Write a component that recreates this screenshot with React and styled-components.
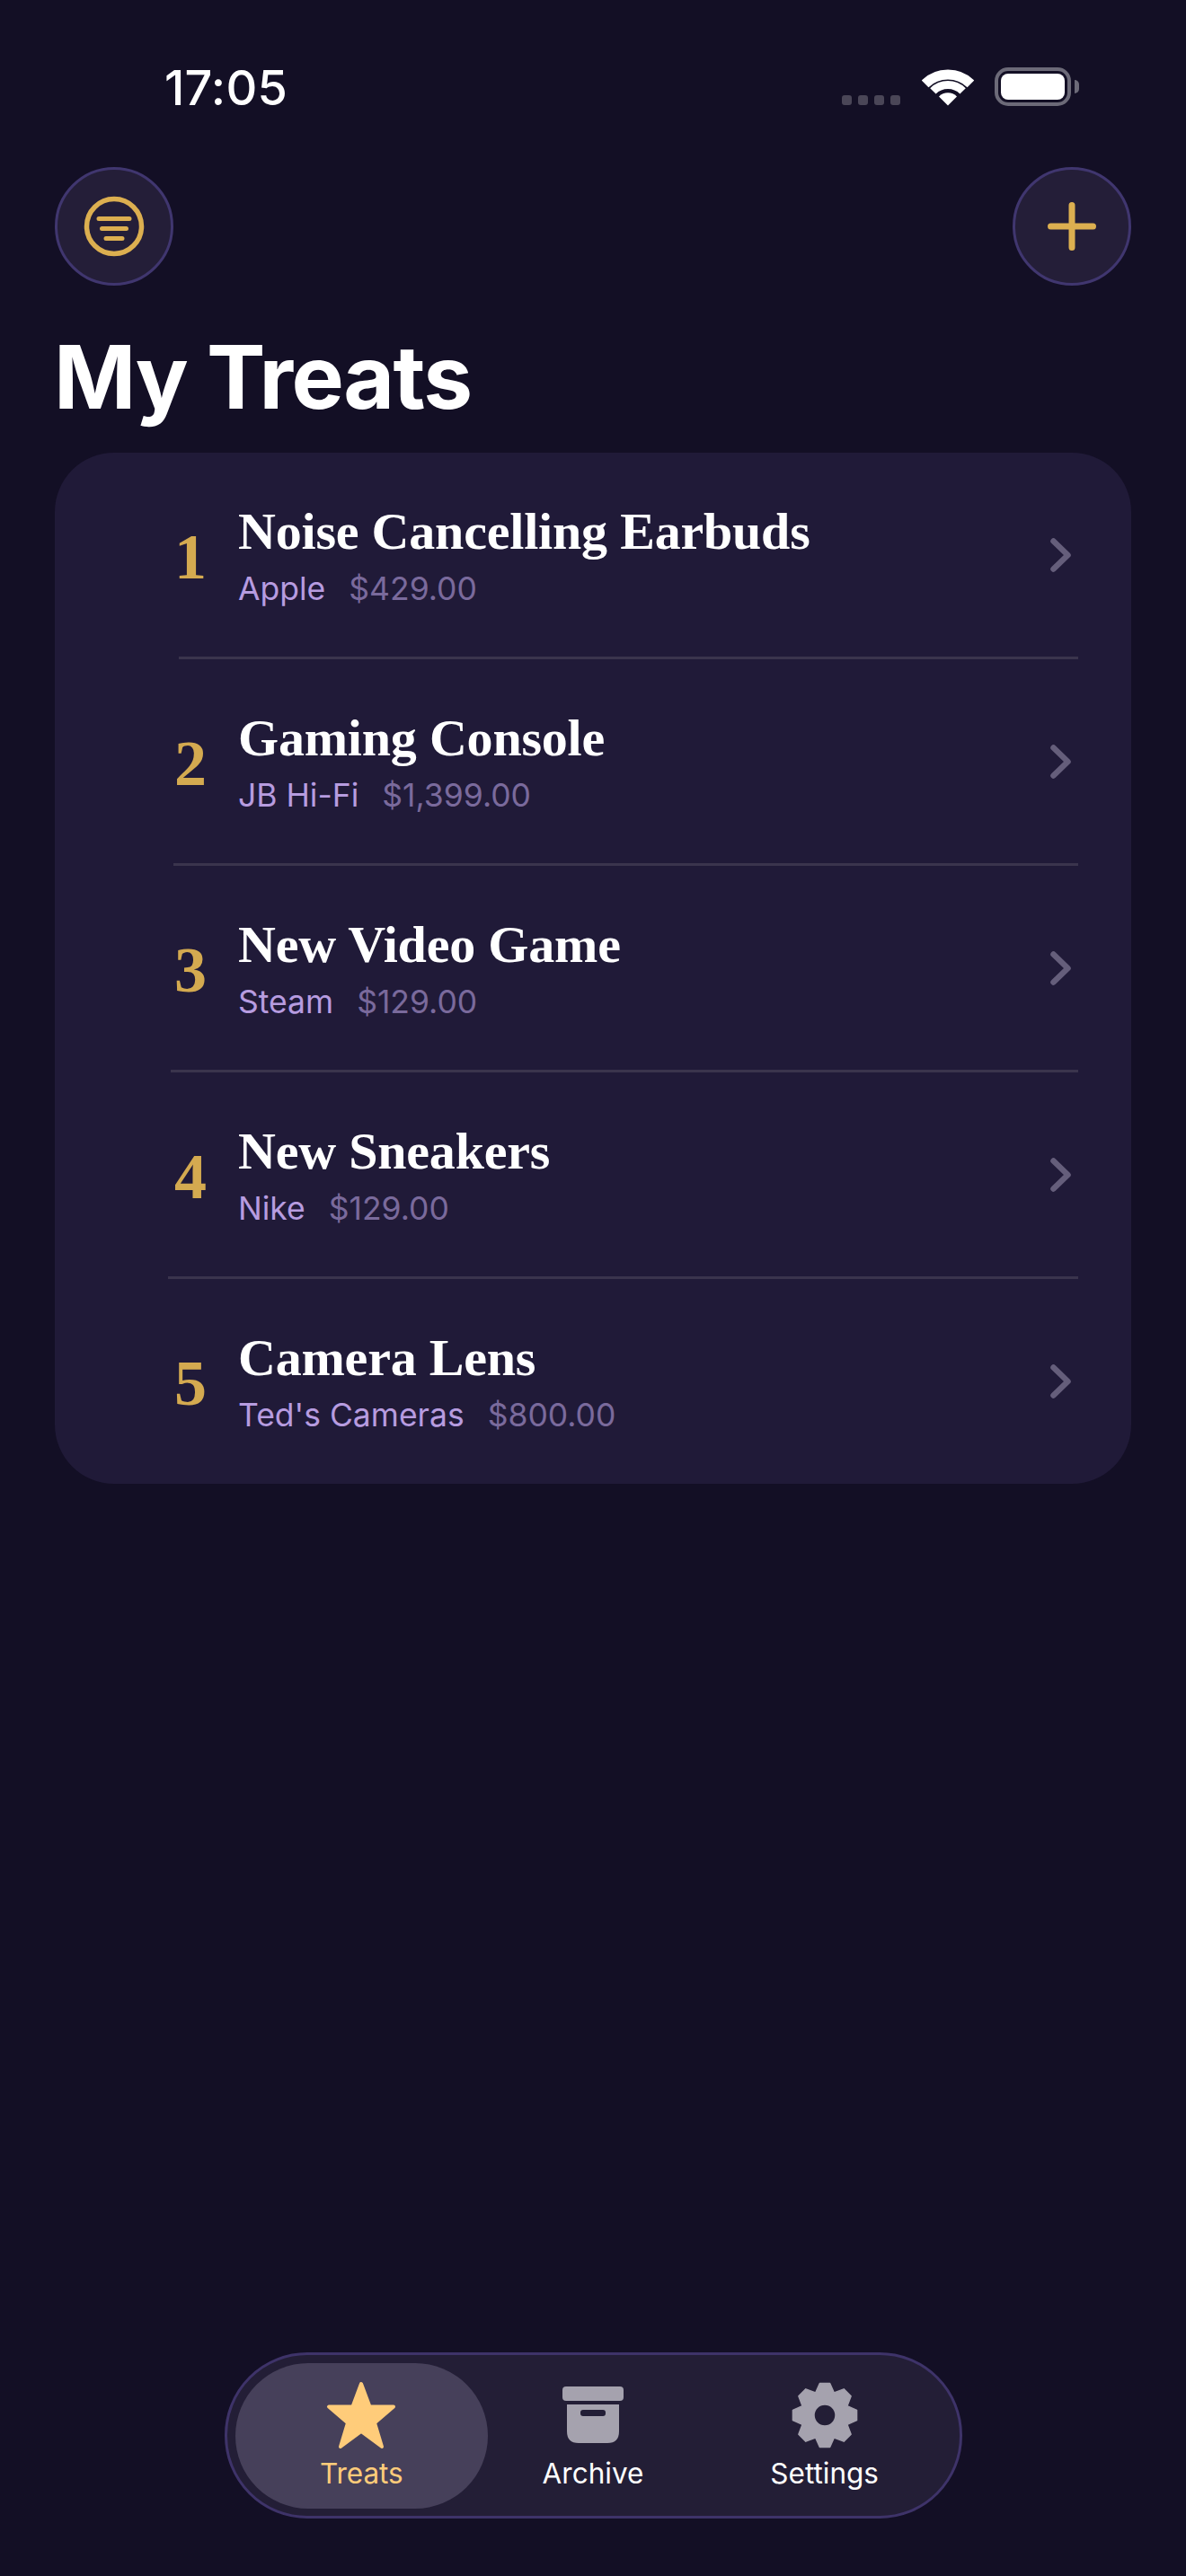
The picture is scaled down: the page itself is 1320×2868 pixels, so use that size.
import React from 'react';
import styled, { createGlobalStyle } from 'styled-components';

const Global = createGlobalStyle`
  html, body { margin: 0; padding: 0; background: #130F25; }
  * { box-sizing: border-box; }
`;

const Page = styled.div`
  width: 1320px;
  height: 2868px;
  background: #130F25;
  display: flex;
  flex-direction: column;
  font-family: Inter, "Liberation Sans", sans-serif;
  color: #fff;
  overflow: hidden;
`;

const StatusBar = styled.div`
  height: 186px;
  padding: 68px 128px 0 183px;
  display: flex;
  justify-content: space-between;
  align-items: flex-start;
`;

const Time = styled.div`
  font-size: 54px;
  line-height: 60px;
  font-weight: 500;
  letter-spacing: 0.2px;
`;

const StatusIcons = styled.div`
  display: flex;
  align-items: flex-start;
  padding-top: 7px;
`;

const Signal = styled.div`
  display: flex;
  gap: 7px;
  margin-top: 31px;
  margin-right: 24px;
`;

const SignalDot = styled.span`
  width: 11px;
  height: 11px;
  border-radius: 3px;
  background: #4A4657;
`;

const Battery = styled.div`
  width: 85px;
  height: 43px;
  margin-left: 23px;
  padding: 3px;
  border: 4px solid #6C6A78;
  border-radius: 15px;
  position: relative;
  &::after {
    content: '';
    position: absolute;
    right: -13px;
    top: 10px;
    width: 5px;
    height: 15px;
    border-radius: 0 5px 5px 0;
    background: #6C6A78;
  }
`;

const BatteryFill = styled.div`
  width: 100%;
  height: 100%;
  background: #fff;
  border-radius: 8px;
`;

const Toolbar = styled.div`
  display: flex;
  justify-content: space-between;
  padding: 0 61px;
`;

const RoundButton = styled.div`
  width: 132px;
  height: 132px;
  border-radius: 50%;
  background: #241E38;
  border: 3px solid #40366F;
  display: flex;
  align-items: center;
  justify-content: center;
`;

const Title = styled.h1`
  margin: 46px 0 0;
  padding-left: 60px;
  height: 140px;
  font-size: 98px;
  line-height: 112px;
  font-weight: 700;
  letter-spacing: -1.5px;
`;

const Card = styled.div`
  margin: 0 61px;
  background: #201A38;
  border-radius: 66px;
  padding-bottom: 1px;
`;

const Row = styled.div`
  height: 227px;
  display: flex;
  align-items: center;
  padding-right: 66px;
`;

const Rank = styled.div`
  width: 169px;
  padding-top: 4px;
  text-align: right;
  font-family: "Liberation Serif", serif;
  font-weight: 700;
  font-size: 72px;
  line-height: 70px;
  color: #D4AA50;
  flex: none;
`;

const Info = styled.div`
  margin-left: 35px;
  flex: 1;
  display: flex;
  flex-direction: column;
`;

const Name = styled.div`
  font-family: "Liberation Serif", serif;
  font-weight: 700;
  font-size: 58px;
  line-height: 66px;
  letter-spacing: -0.2px;
  color: #fff;
  padding-top: 1px;
`;

const Meta = styled.div`
  margin-top: 9px;
  display: flex;
  gap: 26px;
  font-size: 35.5px;
  line-height: 44px;
  font-weight: 400;
`;

const Store = styled.span`
  color: #B79CE0;
`;

const Price = styled.span`
  color: #7A6A9C;
`;

const Separator = styled.div`
  height: 3px;
  margin-left: ${p => p.$inset}px;
  margin-right: 59px;
  background: #3A344D;
`;

const TabBar = styled.div`
  margin: auto auto 64px;
  width: 821px;
  height: 185px;
  border-radius: 92px;
  background: #231E36;
  border: 3px solid #3E3369;
  padding: 9px;
  display: flex;
`;

const Tab = styled.div`
  width: ${p => p.$w}px;
  height: 162px;
  border-radius: 81px;
  background: ${p => (p.$active ? '#46405A' : 'transparent')};
  color: ${p => (p.$active ? '#FFCC7A' : '#fff')};
  display: flex;
  flex-direction: column;
  align-items: center;
  padding-top: 20px;
`;

const TabIcon = styled.div`
  height: 76px;
  display: flex;
  align-items: center;
  justify-content: center;
`;

const TabLabel = styled.div`
  margin-top: 9px;
  font-size: 31.5px;
  line-height: 36px;
  font-weight: 400;
`;

const items = [
  { n: 1, name: 'Noise Cancelling Earbuds', store: 'Apple', price: '$429.00', inset: 138 },
  { n: 2, name: 'Gaming Console', store: 'JB Hi-Fi', price: '$1,399.00', inset: 132 },
  { n: 3, name: 'New Video Game', store: 'Steam', price: '$129.00', inset: 129 },
  { n: 4, name: 'New Sneakers', store: 'Nike', price: '$129.00', inset: 126 },
  { n: 5, name: 'Camera Lens', store: "Ted's Cameras", price: '$800.00' },
];

const Wifi = () => (
  <svg width="58" height="43" viewBox="0 0 58 43">
    <path d="M3.6 18.4 A36.5 36.5 0 0 1 54.4 18.4" fill="none" stroke="#fff" strokeWidth="11" />
    <path d="M12.4 26.4 A23.5 23.5 0 0 1 45.6 26.4" fill="none" stroke="#fff" strokeWidth="9" />
    <path d="M29 42.5 L19 32.5 A14 14 0 0 1 39 32.5 Z" fill="#fff" />
  </svg>
);

const FilterIcon = () => (
  <svg width="70" height="70" viewBox="0 0 70 70" fill="none" stroke="#DCAF50" strokeLinecap="round">
    <circle cx="35" cy="35" r="30.5" strokeWidth="5.5" />
    <path d="M18 26.5H52M21.5 37.5H48.5M26 48.5H44" strokeWidth="5" />
  </svg>
);

const PlusIcon = () => (
  <svg width="54" height="54" viewBox="0 0 54 54" fill="none" stroke="#DCAF50" strokeWidth="7" strokeLinecap="round">
    <path d="M27 3.5V50.5M3.5 27H50.5" />
  </svg>
);

const Chevron = () => (
  <svg width="24" height="38" viewBox="0 0 24 38" fill="none" stroke="#655E7B" strokeWidth="6.5" strokeLinecap="round" strokeLinejoin="round">
    <path d="M3.5 3.5L19.5 19L3.5 34.5" />
  </svg>
);

const Star = () => (
  <svg width="80" height="76" viewBox="0 0 80 76">
    <path
      d="M40 3L49.5 28.5H76L55 46.5L63 73L40 56L17 73L25 46.5L4 28.5H30.5Z"
      fill="#FFCC7A"
      stroke="#FFCC7A"
      strokeWidth="4"
      strokeLinejoin="round"
    />
  </svg>
);

const ArchiveIcon = () => (
  <svg width="68" height="64" viewBox="0 0 68 64" fill="#A5A2AE">
    <rect x="0" y="0" width="68" height="16" rx="4" />
    <path fillRule="evenodd" d="M5 20H63V50Q63 63 50 63H18Q5 63 5 50ZM23 26Q20 26 20 29V30Q20 33 23 33H45Q48 33 48 30V29Q48 26 45 26Z" />
  </svg>
);

const gearPath = (() => {
  const teeth = 8;
  const cx = 37;
  const cy = 37;
  const pts = [];
  for (let i = 0; i < teeth; i += 1) {
    const a = (i / teeth) * Math.PI * 2 - Math.PI / 2;
    const step = (Math.PI * 2) / teeth;
    [[-0.5, 27], [-0.2, 36], [0.2, 36], [0.5, 27]].forEach(([f, r]) => {
      const t = a + f * step;
      pts.push(`${(cx + r * Math.cos(t)).toFixed(2)} ${(cy + r * Math.sin(t)).toFixed(2)}`);
    });
  }
  return `M${pts.join('L')}Z M${cx + 12} ${cy} A12 12 0 1 0 ${cx - 12} ${cy} A12 12 0 1 0 ${cx + 12} ${cy}Z`;
})();

const GearIcon = () => (
  <svg width="74" height="74" viewBox="0 0 74 74">
    <path d={gearPath} fill="#A5A2AE" fillRule="evenodd" stroke="#A5A2AE" strokeWidth="1.5" strokeLinejoin="round" />
  </svg>
);

export default function App() {
  return (
    <Page>
      <Global />
      <StatusBar>
        <Time>17:05</Time>
        <StatusIcons>
          <Signal>
            <SignalDot />
            <SignalDot />
            <SignalDot />
            <SignalDot />
          </Signal>
          <Wifi />
          <Battery>
            <BatteryFill />
          </Battery>
        </StatusIcons>
      </StatusBar>
      <Toolbar>
        <RoundButton><FilterIcon /></RoundButton>
        <RoundButton><PlusIcon /></RoundButton>
      </Toolbar>
      <Title>My Treats</Title>
      <Card>
        {items.map(it => (
          <React.Fragment key={it.n}>
            <Row>
              <Rank>{it.n}</Rank>
              <Info>
                <Name>{it.name}</Name>
                <Meta>
                  <Store>{it.store}</Store>
                  <Price>{it.price}</Price>
                </Meta>
              </Info>
              <Chevron />
            </Row>
            {it.inset && <Separator $inset={it.inset} />}
          </React.Fragment>
        ))}
      </Card>
      <TabBar>
        <Tab $active $w={282}>
          <TabIcon><Star /></TabIcon>
          <TabLabel>Treats</TabLabel>
        </Tab>
        <Tab $w={234}>
          <TabIcon><ArchiveIcon /></TabIcon>
          <TabLabel>Archive</TabLabel>
        </Tab>
        <Tab $w={282}>
          <TabIcon><GearIcon /></TabIcon>
          <TabLabel>Settings</TabLabel>
        </Tab>
      </TabBar>
    </Page>
  );
}
